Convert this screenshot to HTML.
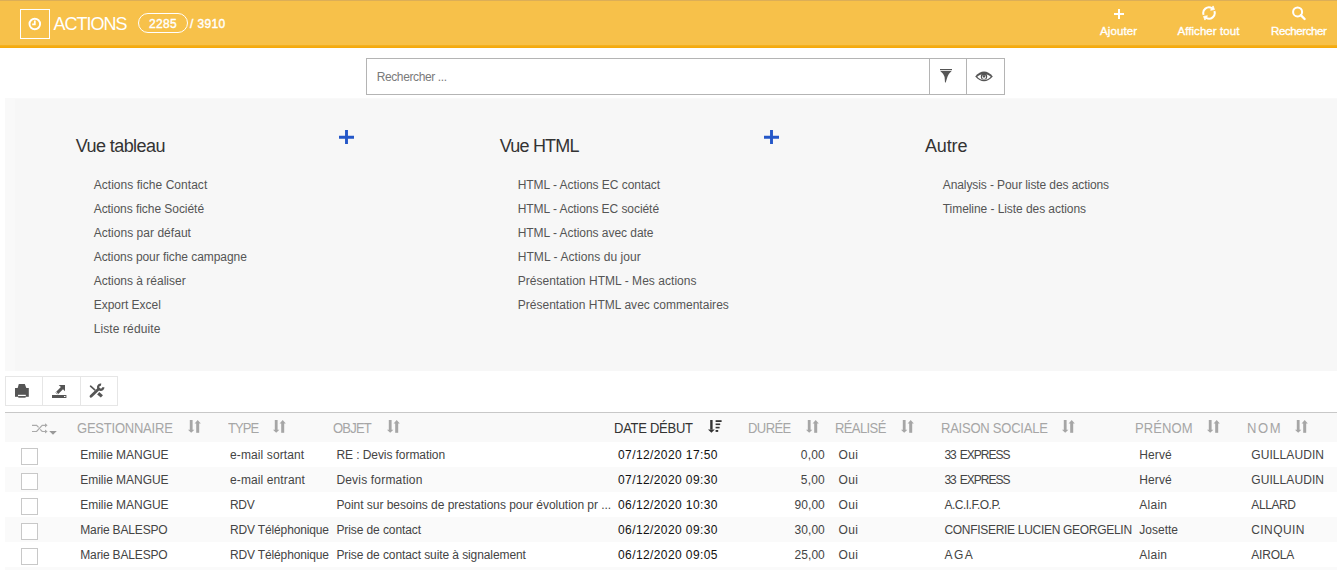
<!DOCTYPE html>
<html><head><meta charset="utf-8"><style>
html,body{margin:0;padding:0;background:#fff;width:1337px;height:570px;overflow:hidden;position:relative}
.t{position:absolute;white-space:nowrap;line-height:1;font-family:"Liberation Sans", sans-serif}
</style></head><body>
<div style="position:absolute;left:0;top:0;width:1337px;height:45px;background:#f7c14a"></div>
<div style="position:absolute;left:0;top:0;width:1337px;height:1px;background:#dcae57"></div>
<div style="position:absolute;left:0;top:45px;width:1337px;height:3px;background:linear-gradient(#f4b324,#f4ac13,#f5a709)"></div>
<div style="position:absolute;left:20px;top:9px;width:28px;height:28px;border:1px solid #fff"></div>
<svg style="position:absolute;left:28px;top:17px" width="14" height="14" viewBox="0 0 14 14">
<circle cx="6.8" cy="7" r="5.3" fill="none" stroke="#fff" stroke-width="1.9"/>
<path d="M6.8 3.4V7.3H4.2" fill="none" stroke="#fff" stroke-width="1.8"/></svg>
<div style="position:absolute;left:138px;top:13px;width:48px;height:18px;border:1px solid #fff;border-radius:10px"></div>
<svg style="position:absolute;left:1113px;top:8px" width="12" height="12" viewBox="0 0 12 12">
<path d="M6 1V11M1 6H11" stroke="#fff" stroke-width="2"/></svg>
<svg style="position:absolute;left:1201px;top:5.4px" width="16" height="16" viewBox="0 0 16 16">
<path d="M2.64 9.95A5.7 5.7 0 0 1 10.85 3.06" fill="none" stroke="#fff" stroke-width="2"/>
<path d="M13.36 6.05A5.7 5.7 0 0 1 5.15 12.94" fill="none" stroke="#fff" stroke-width="2"/>
<path d="M12.1 0.9L13.45 4.56L9.6 5.23Z" fill="#fff" stroke="#fff" stroke-width="0.8"/>
<path d="M3.9 15.1L2.55 11.44L6.4 10.77Z" fill="#fff" stroke="#fff" stroke-width="0.8"/></svg>
<svg style="position:absolute;left:1291px;top:6px" width="16" height="16" viewBox="0 0 16 16">
<circle cx="6.6" cy="5.9" r="4.5" fill="none" stroke="#fff" stroke-width="2"/>
<path d="M9.8 9.2L13.6 13" stroke="#fff" stroke-width="2.4" stroke-linecap="round"/></svg>
<div style="position:absolute;left:366px;top:58px;width:637px;height:35px;border:1px solid #b4b4b4;background:#fff"></div>
<div style="position:absolute;left:929px;top:58px;width:1px;height:37px;background:#b4b4b4"></div>
<div style="position:absolute;left:966px;top:58px;width:1px;height:37px;background:#b4b4b4"></div>
<svg style="position:absolute;left:940px;top:69px" width="12" height="14" viewBox="0 0 12 14">
<rect x="0" y="0" width="12" height="1.2" fill="#555"/>
<path d="M0.3 2H11.6C9.6 3.8 8.1 5.8 7.4 8L5.7 13.6H5L4.6 8C4 5.8 2.4 3.8 0.3 2Z" fill="#555"/></svg>
<svg style="position:absolute;left:974.5px;top:70.5px" width="18" height="11" viewBox="0 0 18 11">
<path d="M0.2 5.6C3 2 6 0.5 9 0.5S15 2 17.8 5.6C15 8.8 12 10.3 9 10.3S3 8.8 0.2 5.6Z" fill="#555"/>
<path d="M2.2 5.8C4.5 3.8 6.5 3.2 9 3.2S13.5 3.8 15.8 5.8C13.5 8 11.5 8.9 9 8.9S4.5 8 2.2 5.8Z" fill="#fff"/>
<circle cx="9" cy="5.4" r="3.2" fill="#555"/><circle cx="9" cy="5.9" r="2" fill="#fff"/><circle cx="9" cy="5.4" r="1.2" fill="#555"/>
<rect x="7.8" y="1.5" width="2.4" height="3" fill="#555"/></svg>
<div style="position:absolute;left:5px;top:98px;width:1332px;height:273px;background:#f7f7f7"></div>
<div style="position:absolute;left:5px;top:98px;width:10px;height:273px;background:#f9f9f9"></div>
<div style="position:absolute;left:15px;top:98px;width:1322px;height:1px;background:#f9f9f9"></div>
<svg style="position:absolute;left:339px;top:130px" width="15" height="14" viewBox="0 0 15 14">
<path d="M7.5 0V14M0 7.2H15" stroke="#2457c8" stroke-width="2.9"/></svg>
<svg style="position:absolute;left:764px;top:130px" width="15" height="14" viewBox="0 0 15 14">
<path d="M7.5 0V14M0 7.2H15" stroke="#2457c8" stroke-width="2.9"/></svg>
<div style="position:absolute;left:5px;top:376px;width:36px;height:28px;border:1px solid #e6e6e6;background:#fff"></div>
<div style="position:absolute;left:42px;top:376px;width:37px;height:28px;border:1px solid #e6e6e6;background:#fff"></div>
<div style="position:absolute;left:80px;top:376px;width:36px;height:28px;border:1px solid #e6e6e6;background:#fff"></div>
<svg style="position:absolute;left:15px;top:384px" width="14" height="14" viewBox="0 0 14 14">
<path d="M3.8 0H9.8L11.3 4H2.7Z" fill="#555"/><rect x="0" y="4" width="13.8" height="8.8" fill="#555"/><rect x="3" y="10.8" width="7.8" height="1.3" fill="#fff"/><rect x="3.3" y="12.1" width="7.3" height="1.6" fill="#555"/></svg>
<svg style="position:absolute;left:52px;top:384px" width="15" height="14" viewBox="0 0 15 14">
<path d="M6.7 1H13V7.2L11 5.2L6.3 9.9L4.2 7.8L8.9 3.1Z" fill="#555"/><path d="M3.7 8.4L5.6 10.3" stroke="#888" stroke-width="1"/><rect x="0" y="11" width="14.4" height="3" fill="#555"/><rect x="12" y="12" width="1.5" height="1" fill="#fff"/></svg>
<svg style="position:absolute;left:84px;top:378px" width="26" height="26" viewBox="0 0 26 26">
<path d="M6.6 8.2L10.8 11.8" stroke="#555" stroke-width="1.7" stroke-linecap="round"/>
<path d="M14.2 15.2L17.9 18.4" stroke="#555" stroke-width="3.2"/>
<path d="M7 18.2L14.6 11" stroke="#555" stroke-width="2.8" stroke-linecap="round"/>
<path d="M19.3 9.2A2.6 2.6 0 1 1 17.1 6.6" fill="none" stroke="#555" stroke-width="2.3"/></svg>
<div style="position:absolute;left:5px;top:412px;width:1332px;height:1px;background:#c8c8c8"></div>
<div style="position:absolute;left:5px;top:413px;width:1332px;height:29px;background:#f9f9f9"></div>
<div style="position:absolute;left:5px;top:467px;width:1332px;height:25px;background:#fafafa"></div>
<div style="position:absolute;left:5px;top:517px;width:1332px;height:25px;background:#fafafa"></div>
<div style="position:absolute;left:5px;top:567px;width:1332px;height:25px;background:#fafafa"></div>
<svg style="position:absolute;left:28px;top:418px" width="34" height="22" viewBox="0 0 34 22">
<path d="M4 7.3H8.6L10.6 9.4" fill="none" stroke="#aaa" stroke-width="1.2"/>
<path d="M4 13.5H8.6L14.2 7.3H18" fill="none" stroke="#aaa" stroke-width="1.2"/>
<path d="M12.2 11.4L14.2 13.5H18" fill="none" stroke="#aaa" stroke-width="1.2"/>
<path d="M17 5.2L19.6 7.3L17 9.4Z M17 11.4L19.6 13.5L17 15.6Z" fill="#aaa"/>
<path d="M21.2 13.1H28.8L25 16.8Z" fill="#999"/></svg>
<svg style="position:absolute;left:187.5px;top:420px" width="14" height="13" viewBox="0 0 14 13">
<rect x="1.8" y="0" width="2.8" height="10" fill="#a6a6a6"/><path d="M0 9.8H6.4L3.2 12.8Z" fill="#a6a6a6"/>
<rect x="8.2" y="3" width="3" height="9.8" fill="#a6a6a6"/><path d="M6.6 3.5H12.8L9.7 0Z" fill="#a6a6a6"/></svg>
<svg style="position:absolute;left:273.2px;top:420px" width="14" height="13" viewBox="0 0 14 13">
<rect x="1.8" y="0" width="2.8" height="10" fill="#a6a6a6"/><path d="M0 9.8H6.4L3.2 12.8Z" fill="#a6a6a6"/>
<rect x="8.2" y="3" width="3" height="9.8" fill="#a6a6a6"/><path d="M6.6 3.5H12.8L9.7 0Z" fill="#a6a6a6"/></svg>
<svg style="position:absolute;left:387.3px;top:420px" width="14" height="13" viewBox="0 0 14 13">
<rect x="1.8" y="0" width="2.8" height="10" fill="#a6a6a6"/><path d="M0 9.8H6.4L3.2 12.8Z" fill="#a6a6a6"/>
<rect x="8.2" y="3" width="3" height="9.8" fill="#a6a6a6"/><path d="M6.6 3.5H12.8L9.7 0Z" fill="#a6a6a6"/></svg>
<svg style="position:absolute;left:708.4px;top:420px" width="15" height="13" viewBox="0 0 15 13">
<rect x="2.2" y="0" width="2.4" height="9.6" fill="#333"/><path d="M0 9.4H6.8L3.4 12.8Z" fill="#333"/>
<rect x="7.6" y="0.2" width="6" height="1.8" fill="#333"/><rect x="7.6" y="3.5" width="4.6" height="1.6" fill="#333"/><rect x="7.6" y="6.8" width="4" height="1.6" fill="#333"/><rect x="7.6" y="10" width="2.6" height="1.9" fill="#333"/></svg>
<svg style="position:absolute;left:806px;top:420px" width="14" height="13" viewBox="0 0 14 13">
<rect x="1.8" y="0" width="2.8" height="10" fill="#a6a6a6"/><path d="M0 9.8H6.4L3.2 12.8Z" fill="#a6a6a6"/>
<rect x="8.2" y="3" width="3" height="9.8" fill="#a6a6a6"/><path d="M6.6 3.5H12.8L9.7 0Z" fill="#a6a6a6"/></svg>
<svg style="position:absolute;left:900.6px;top:420px" width="14" height="13" viewBox="0 0 14 13">
<rect x="1.8" y="0" width="2.8" height="10" fill="#a6a6a6"/><path d="M0 9.8H6.4L3.2 12.8Z" fill="#a6a6a6"/>
<rect x="8.2" y="3" width="3" height="9.8" fill="#a6a6a6"/><path d="M6.6 3.5H12.8L9.7 0Z" fill="#a6a6a6"/></svg>
<svg style="position:absolute;left:1062.2px;top:420px" width="14" height="13" viewBox="0 0 14 13">
<rect x="1.8" y="0" width="2.8" height="10" fill="#a6a6a6"/><path d="M0 9.8H6.4L3.2 12.8Z" fill="#a6a6a6"/>
<rect x="8.2" y="3" width="3" height="9.8" fill="#a6a6a6"/><path d="M6.6 3.5H12.8L9.7 0Z" fill="#a6a6a6"/></svg>
<svg style="position:absolute;left:1207.4px;top:420px" width="14" height="13" viewBox="0 0 14 13">
<rect x="1.8" y="0" width="2.8" height="10" fill="#a6a6a6"/><path d="M0 9.8H6.4L3.2 12.8Z" fill="#a6a6a6"/>
<rect x="8.2" y="3" width="3" height="9.8" fill="#a6a6a6"/><path d="M6.6 3.5H12.8L9.7 0Z" fill="#a6a6a6"/></svg>
<svg style="position:absolute;left:1295px;top:420px" width="14" height="13" viewBox="0 0 14 13">
<rect x="1.8" y="0" width="2.8" height="10" fill="#a6a6a6"/><path d="M0 9.8H6.4L3.2 12.8Z" fill="#a6a6a6"/>
<rect x="8.2" y="3" width="3" height="9.8" fill="#a6a6a6"/><path d="M6.6 3.5H12.8L9.7 0Z" fill="#a6a6a6"/></svg>
<div style="position:absolute;left:21px;top:448px;width:15px;height:15px;border:1px solid #c8c8c8;background:#fff"></div>
<div style="position:absolute;left:21px;top:473px;width:15px;height:15px;border:1px solid #c8c8c8;background:#fff"></div>
<div style="position:absolute;left:21px;top:498px;width:15px;height:15px;border:1px solid #c8c8c8;background:#fff"></div>
<div style="position:absolute;left:21px;top:523px;width:15px;height:15px;border:1px solid #c8c8c8;background:#fff"></div>
<div style="position:absolute;left:21px;top:548px;width:15px;height:15px;border:1px solid #c8c8c8;background:#fff"></div>
<div class="t" style="left:53.50px;top:14.76px;font-size:18px;color:#fff;font-weight:normal;letter-spacing:-1.000px;">ACTIONS</div>
<div class="t" style="left:149.00px;top:17.64px;font-size:12px;color:#fff;font-weight:normal;letter-spacing:0.326px;-webkit-text-stroke:0.4px #fff">2285</div>
<div class="t" style="left:190.00px;top:17.64px;font-size:12px;color:#fff;font-weight:normal;letter-spacing:0.362px;-webkit-text-stroke:0.4px #fff">/ 3910</div>
<div class="t" style="left:1100.00px;top:26.17px;font-size:11.5px;color:#fff;font-weight:normal;letter-spacing:0.115px;-webkit-text-stroke:0.35px #fff">Ajouter</div>
<div class="t" style="left:1177.40px;top:26.17px;font-size:11.5px;color:#fff;font-weight:normal;letter-spacing:0.070px;-webkit-text-stroke:0.35px #fff">Afficher tout</div>
<div class="t" style="left:1271.00px;top:26.17px;font-size:11.5px;color:#fff;font-weight:normal;letter-spacing:-0.401px;-webkit-text-stroke:0.35px #fff">Rechercher</div>
<div class="t" style="left:376.70px;top:70.84px;font-size:12px;color:#7a7a7a;font-weight:normal;letter-spacing:-0.387px;">Rechercher ...</div>
<div class="t" style="left:75.80px;top:136.66px;font-size:18px;color:#333;font-weight:normal;letter-spacing:-0.580px;">Vue tableau</div>
<div class="t" style="left:93.70px;top:178.64px;font-size:12px;color:#555;font-weight:normal;letter-spacing:0.041px;">Actions fiche Contact</div>
<div class="t" style="left:93.70px;top:202.64px;font-size:12px;color:#555;font-weight:normal;letter-spacing:-0.051px;">Actions fiche Société</div>
<div class="t" style="left:93.70px;top:226.64px;font-size:12px;color:#555;font-weight:normal;letter-spacing:0.030px;">Actions par défaut</div>
<div class="t" style="left:93.70px;top:250.64px;font-size:12px;color:#555;font-weight:normal;letter-spacing:-0.061px;">Actions pour fiche campagne</div>
<div class="t" style="left:93.70px;top:274.64px;font-size:12px;color:#555;font-weight:normal;letter-spacing:-0.003px;">Actions à réaliser</div>
<div class="t" style="left:93.70px;top:298.64px;font-size:12px;color:#555;font-weight:normal;letter-spacing:-0.018px;">Export Excel</div>
<div class="t" style="left:93.70px;top:322.64px;font-size:12px;color:#555;font-weight:normal;letter-spacing:0.108px;">Liste réduite</div>
<div class="t" style="left:499.80px;top:136.66px;font-size:18px;color:#333;font-weight:normal;letter-spacing:-0.807px;">Vue HTML</div>
<div class="t" style="left:517.70px;top:178.64px;font-size:12px;color:#555;font-weight:normal;letter-spacing:-0.049px;">HTML - Actions EC contact</div>
<div class="t" style="left:517.70px;top:202.64px;font-size:12px;color:#555;font-weight:normal;letter-spacing:-0.065px;">HTML - Actions EC société</div>
<div class="t" style="left:517.70px;top:226.64px;font-size:12px;color:#555;font-weight:normal;letter-spacing:-0.051px;">HTML - Actions avec date</div>
<div class="t" style="left:517.70px;top:250.64px;font-size:12px;color:#555;font-weight:normal;letter-spacing:0.071px;">HTML - Actions du jour</div>
<div class="t" style="left:517.70px;top:274.64px;font-size:12px;color:#555;font-weight:normal;letter-spacing:0.041px;">Présentation HTML - Mes actions</div>
<div class="t" style="left:517.70px;top:298.64px;font-size:12px;color:#555;font-weight:normal;letter-spacing:0.025px;">Présentation HTML avec commentaires</div>
<div class="t" style="left:924.90px;top:136.66px;font-size:18px;color:#333;font-weight:normal;letter-spacing:-0.103px;">Autre</div>
<div class="t" style="left:942.80px;top:178.64px;font-size:12px;color:#555;font-weight:normal;letter-spacing:-0.097px;">Analysis - Pour liste des actions</div>
<div class="t" style="left:942.80px;top:202.64px;font-size:12px;color:#555;font-weight:normal;letter-spacing:-0.065px;">Timeline - Liste des actions</div>
<div class="t" style="left:77.30px;top:421.35px;font-size:14px;color:#a6a6a6;font-weight:normal;letter-spacing:-0.252px;;transform:scaleX(0.93);transform-origin:0 0">GESTIONNAIRE</div>
<div class="t" style="left:227.60px;top:421.35px;font-size:14px;color:#a6a6a6;font-weight:normal;letter-spacing:-1.036px;;transform:scaleX(0.93);transform-origin:0 0">TYPE</div>
<div class="t" style="left:333.30px;top:421.35px;font-size:14px;color:#a6a6a6;font-weight:normal;letter-spacing:-0.854px;;transform:scaleX(0.93);transform-origin:0 0">OBJET</div>
<div class="t" style="left:614.37px;top:421.35px;font-size:14px;color:#333;font-weight:normal;letter-spacing:-0.297px;;transform:scaleX(0.93);transform-origin:0 0">DATE DÉBUT</div>
<div class="t" style="left:748.37px;top:421.35px;font-size:14px;color:#a6a6a6;font-weight:normal;letter-spacing:-0.627px;;transform:scaleX(0.93);transform-origin:0 0">DURÉE</div>
<div class="t" style="left:834.77px;top:421.35px;font-size:14px;color:#a6a6a6;font-weight:normal;letter-spacing:-0.655px;;transform:scaleX(0.93);transform-origin:0 0">RÉALISÉ</div>
<div class="t" style="left:940.67px;top:421.35px;font-size:14px;color:#a6a6a6;font-weight:normal;letter-spacing:-0.259px;;transform:scaleX(0.93);transform-origin:0 0">RAISON SOCIALE</div>
<div class="t" style="left:1135.47px;top:421.35px;font-size:14px;color:#a6a6a6;font-weight:normal;letter-spacing:0.086px;;transform:scaleX(0.93);transform-origin:0 0">PRÉNOM</div>
<div class="t" style="left:1247.07px;top:421.35px;font-size:14px;color:#a6a6a6;font-weight:normal;letter-spacing:1.704px;;transform:scaleX(0.93);transform-origin:0 0">NOM</div>
<div class="t" style="left:80.30px;top:448.64px;font-size:12px;color:#444;font-weight:normal;letter-spacing:-0.031px;">Emilie MANGUE</div>
<div class="t" style="left:230.00px;top:448.64px;font-size:12px;color:#444;font-weight:normal;letter-spacing:0.111px;">e-mail sortant</div>
<div class="t" style="left:336.40px;top:448.64px;font-size:12px;color:#444;font-weight:normal;letter-spacing:-0.072px;">RE : Devis formation</div>
<div class="t" style="left:618.00px;top:448.64px;font-size:12px;color:#111;font-weight:normal;letter-spacing:0.403px;">07/12/2020 17:50</div>
<div class="t" style="left:800.80px;top:448.64px;font-size:12px;color:#444;font-weight:normal;letter-spacing:0.206px;">0,00</div>
<div class="t" style="left:838.50px;top:448.64px;font-size:12px;color:#444;font-weight:normal;letter-spacing:0.396px;">Oui</div>
<div class="t" style="left:944.40px;top:448.64px;font-size:12px;color:#444;font-weight:normal;letter-spacing:-0.996px;;word-spacing:1.6px">33 EXPRESS</div>
<div class="t" style="left:1139.30px;top:448.64px;font-size:12px;color:#444;font-weight:normal;letter-spacing:0.091px;">Hervé</div>
<div class="t" style="left:1251.30px;top:448.64px;font-size:12px;color:#444;font-weight:normal;letter-spacing:0.072px;">GUILLAUDIN</div>
<div class="t" style="left:80.30px;top:473.64px;font-size:12px;color:#444;font-weight:normal;letter-spacing:-0.031px;">Emilie MANGUE</div>
<div class="t" style="left:230.00px;top:473.64px;font-size:12px;color:#444;font-weight:normal;letter-spacing:0.113px;">e-mail entrant</div>
<div class="t" style="left:336.40px;top:473.64px;font-size:12px;color:#444;font-weight:normal;letter-spacing:0.187px;">Devis formation</div>
<div class="t" style="left:618.00px;top:473.64px;font-size:12px;color:#111;font-weight:normal;letter-spacing:0.403px;">07/12/2020 09:30</div>
<div class="t" style="left:800.80px;top:473.64px;font-size:12px;color:#444;font-weight:normal;letter-spacing:0.206px;">5,00</div>
<div class="t" style="left:838.50px;top:473.64px;font-size:12px;color:#444;font-weight:normal;letter-spacing:0.396px;">Oui</div>
<div class="t" style="left:944.40px;top:473.64px;font-size:12px;color:#444;font-weight:normal;letter-spacing:-0.996px;;word-spacing:1.6px">33 EXPRESS</div>
<div class="t" style="left:1139.30px;top:473.64px;font-size:12px;color:#444;font-weight:normal;letter-spacing:0.091px;">Hervé</div>
<div class="t" style="left:1251.30px;top:473.64px;font-size:12px;color:#444;font-weight:normal;letter-spacing:0.072px;">GUILLAUDIN</div>
<div class="t" style="left:80.30px;top:498.64px;font-size:12px;color:#444;font-weight:normal;letter-spacing:-0.031px;">Emilie MANGUE</div>
<div class="t" style="left:230.00px;top:498.64px;font-size:12px;color:#444;font-weight:normal;letter-spacing:-0.316px;">RDV</div>
<div class="t" style="left:336.40px;top:498.64px;font-size:12px;color:#444;font-weight:normal;letter-spacing:-0.039px;">Point sur besoins de prestations pour évolution pr ...</div>
<div class="t" style="left:618.00px;top:498.64px;font-size:12px;color:#111;font-weight:normal;letter-spacing:0.403px;">06/12/2020 10:30</div>
<div class="t" style="left:794.60px;top:498.64px;font-size:12px;color:#444;font-weight:normal;letter-spacing:0.036px;">90,00</div>
<div class="t" style="left:838.50px;top:498.64px;font-size:12px;color:#444;font-weight:normal;letter-spacing:0.396px;">Oui</div>
<div class="t" style="left:944.40px;top:498.64px;font-size:12px;color:#444;font-weight:normal;letter-spacing:-0.497px;">A.C.I.F.O.P.</div>
<div class="t" style="left:1139.30px;top:498.64px;font-size:12px;color:#444;font-weight:normal;letter-spacing:0.248px;">Alain</div>
<div class="t" style="left:1251.30px;top:498.64px;font-size:12px;color:#444;font-weight:normal;letter-spacing:-0.404px;">ALLARD</div>
<div class="t" style="left:80.30px;top:523.64px;font-size:12px;color:#444;font-weight:normal;letter-spacing:-0.169px;">Marie BALESPO</div>
<div class="t" style="left:230.00px;top:523.64px;font-size:12px;color:#444;font-weight:normal;letter-spacing:-0.148px;">RDV Téléphonique</div>
<div class="t" style="left:336.40px;top:523.64px;font-size:12px;color:#444;font-weight:normal;letter-spacing:-0.094px;">Prise de contact</div>
<div class="t" style="left:618.00px;top:523.64px;font-size:12px;color:#111;font-weight:normal;letter-spacing:0.403px;">06/12/2020 09:30</div>
<div class="t" style="left:794.60px;top:523.64px;font-size:12px;color:#444;font-weight:normal;letter-spacing:0.036px;">30,00</div>
<div class="t" style="left:838.50px;top:523.64px;font-size:12px;color:#444;font-weight:normal;letter-spacing:0.396px;">Oui</div>
<div class="t" style="left:944.40px;top:523.64px;font-size:12px;color:#444;font-weight:normal;letter-spacing:-0.296px;">CONFISERIE LUCIEN GEORGELIN</div>
<div class="t" style="left:1139.30px;top:523.64px;font-size:12px;color:#444;font-weight:normal;letter-spacing:-0.003px;">Josette</div>
<div class="t" style="left:1251.30px;top:523.64px;font-size:12px;color:#444;font-weight:normal;letter-spacing:0.400px;">CINQUIN</div>
<div class="t" style="left:80.30px;top:548.64px;font-size:12px;color:#444;font-weight:normal;letter-spacing:-0.169px;">Marie BALESPO</div>
<div class="t" style="left:230.00px;top:548.64px;font-size:12px;color:#444;font-weight:normal;letter-spacing:-0.148px;">RDV Téléphonique</div>
<div class="t" style="left:336.40px;top:548.64px;font-size:12px;color:#444;font-weight:normal;letter-spacing:-0.093px;">Prise de contact suite à signalement</div>
<div class="t" style="left:618.00px;top:548.64px;font-size:12px;color:#111;font-weight:normal;letter-spacing:0.403px;">06/12/2020 09:05</div>
<div class="t" style="left:794.60px;top:548.64px;font-size:12px;color:#444;font-weight:normal;letter-spacing:0.036px;">25,00</div>
<div class="t" style="left:838.50px;top:548.64px;font-size:12px;color:#444;font-weight:normal;letter-spacing:0.396px;">Oui</div>
<div class="t" style="left:944.40px;top:548.64px;font-size:12px;color:#444;font-weight:normal;letter-spacing:-0.576px;">A G A</div>
<div class="t" style="left:1139.30px;top:548.64px;font-size:12px;color:#444;font-weight:normal;letter-spacing:0.248px;">Alain</div>
<div class="t" style="left:1251.30px;top:548.64px;font-size:12px;color:#444;font-weight:normal;letter-spacing:-0.202px;">AIROLA</div>
</body></html>
